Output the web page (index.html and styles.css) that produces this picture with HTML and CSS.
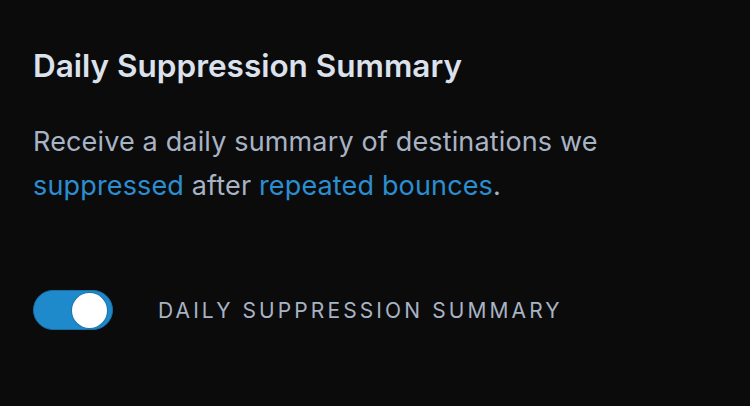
FILE: index.html
```html
<!DOCTYPE html>
<html lang="en">
<head>
<meta charset="UTF-8">
<meta name="viewport" content="width=device-width, initial-scale=1.0">
<title>Daily Suppression Summary</title>
<link rel="stylesheet" href="styles.css">
</head>
<body>

<section class="setting">
    <h2>Daily Suppression Summary</h2>
    <p class="setting-desc">
        Receive a daily summary of destinations we
        <a href="#">suppressed</a> after <a href="#">repeated bounces</a>.
    </p>

    <!-- toggle row -->
    <label class="toggle-row">
        <input type="checkbox" class="toggle-input" checked>
        <span class="toggle"><span class="knob"></span></span>
        <span class="toggle-label">Daily Suppression Summary</span>
    </label>
</section>

</body>
</html>
```

FILE: styles.css
```css
body {
    margin: 0;
    padding: 0;
    background: #0b0b0c;
    font-family: Inter, "Noto Sans", sans-serif;
}
.setting {
    padding: 44px 33px;
}
h2 {
    margin: 0;
    font-size: 31.5px;
    font-weight: 600;
    color: #dce2ec;
    line-height: 44px;
}
.setting-desc {
    margin: 32px 0 0;
    font-size: 27px;
    letter-spacing: 0.15px;
    line-height: 44px;
    color: #a8b3c4;
    max-width: 600px;
}
.setting-desc a {
    color: #2b8ed0;
    text-decoration: none;
}
.toggle-row {
    display: flex;
    align-items: center;
    gap: 45px;
    margin-top: 82px;
    cursor: pointer;
}
.toggle-input {
    display: none;
}
.toggle {
    display: flex;
    justify-content: flex-end;
    align-items: center;
    box-sizing: border-box;
    width: 80px;
    height: 40px;
    padding: 2px 5px;
    border: 1px solid #1a6ea6;
    border-radius: 20px;
    background: #1f8acb;
}
.knob {
    width: 35px;
    height: 35px;
    border-radius: 50%;
    background: #fff;
    box-shadow: 0 0 0 1px #1d75ad;
}
.toggle-label {
    font-size: 21px;
    letter-spacing: 3.1px;
    text-transform: uppercase;
    color: #a8b3c4;
}
```
